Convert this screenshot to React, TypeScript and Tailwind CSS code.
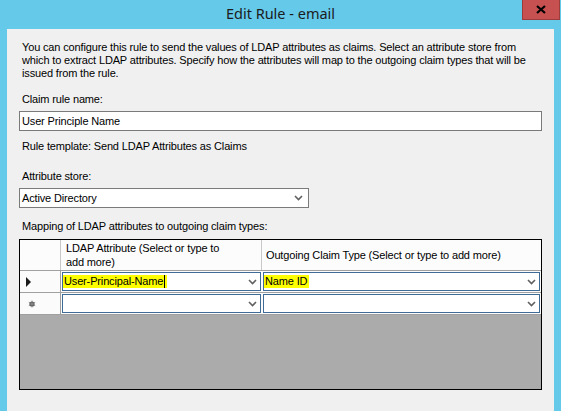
import type { ReactNode } from "react";

function Chevron() {
  return (
    <svg width="9" height="6" viewBox="0 0 9 6" className="shrink-0" aria-hidden="true">
      <polyline points="1,1 4.5,4.5 8,1" fill="none" stroke="#606060" strokeWidth="1.6" />
    </svg>
  );
}

function Label({ children, className = "" }: { children: ReactNode; className?: string }) {
  return <p className={`ml-[3px] whitespace-nowrap text-[11px] leading-[13px] text-black ${className}`}>{children}</p>;
}

function GridCombo({ value, highlight, caret }: { value?: string; highlight?: boolean; caret?: boolean }) {
  return (
    <div className="m-px flex h-[calc(100%-2px)] items-center border border-[#3f6b97] bg-white pr-[3px]">
      <div className="flex min-w-0 flex-1 items-center">
        {value ? (
          <span className={`flex h-[13px] items-center pl-[1px] pr-[2px] text-[11px] leading-[13px] text-black ${highlight ? "bg-[#ffff00]" : ""}`}>
            {value}
            {caret ? <span className="ml-px inline-block h-[13px] w-px bg-black" /> : null}
          </span>
        ) : null}
      </div>
      <Chevron />
    </div>
  );
}

function RowHeader({ children }: { children?: ReactNode }) {
  return (
    <div className="flex items-center border-r border-[#a0a0a0] bg-[#fbfbfb] pl-[6px]">{children}</div>
  );
}

export default function App() {
  return (
    <div className="flex h-[411px] w-[561px] flex-col overflow-hidden bg-[#65c9ea] font-['Liberation_Sans',Arial,sans-serif]">
      <div className="relative flex h-[29px] shrink-0 items-center justify-center">
        <span className="pb-[1px] font-['Noto_Sans',sans-serif] text-[14.5px] text-[#1b1b1b]">Edit Rule - email</span>
        <button
          type="button"
          className="absolute right-px top-0 flex h-[20px] w-[38px] items-center justify-center border border-t-0 border-[#9e3c3c] bg-[#c75050]"
        >
          <svg width="10" height="9" viewBox="0 0 10 9" aria-hidden="true">
            <path d="M1 1 L9 8 M9 1 L1 8" stroke="#000" strokeWidth="2.2" />
          </svg>
        </button>
      </div>

      <div className="mx-[7px] flex flex-1 flex-col bg-[#f0f0f0] px-[12px] pt-[12px] tracking-[-0.15px]">
        <Label>
          You can configure this rule to send the values of LDAP attributes as claims. Select an attribute store from
          <br />
          which to extract LDAP attributes. Specify how the attributes will map to the outgoing claim types that will be
          <br />
          issued from the rule.
        </Label>

        <Label className="mt-[13px]">Claim rule name:</Label>
        <div className="mt-[5px] flex h-[20px] w-[523px] items-center border border-[#7a7a7a] bg-white pl-[2px] text-[11px] text-black">
          User Principle Name
        </div>

        <Label className="mt-[9px]">Rule template: Send LDAP Attributes as Claims</Label>

        <Label className="mt-[17px]">Attribute store:</Label>
        <div className="mt-[5px] flex h-[20px] w-[290px] items-center justify-between border border-[#7a7a7a] bg-white pl-[2px] pr-[5px] text-[11px] text-black">
          <span>Active Directory</span>
          <Chevron />
        </div>

        <Label className="mt-[12px]">Mapping of LDAP attributes to outgoing claim types:</Label>

        <div className="mt-[6px] flex h-[151px] w-[523px] flex-col border border-black bg-[#ababab]">
          <div className="grid h-[31px] grid-cols-[41px_201px_1fr] border-b border-[#a0a0a0] bg-[#fcfcfc]">
            <div className="border-r border-[#c8c8c8]" />
            <div className="flex items-center whitespace-nowrap border-r border-[#c8c8c8] pl-[5px] text-[11px] leading-[14px] text-black">
              LDAP Attribute (Select or type to
              <br />
              add more)
            </div>
            <div className="flex items-center pl-[4px] text-[11px] text-black">
              Outgoing Claim Type (Select or type to add more)
            </div>
          </div>

          <div className="grid h-[22px] grid-cols-[41px_201px_1fr] border-b border-[#a0a0a0] bg-[#fcfcfc]">
            <RowHeader>
              <svg width="6" height="10" viewBox="0 0 6 10" aria-hidden="true">
                <polygon points="0,0 5,5 0,10" fill="#1a1a1a" />
              </svg>
            </RowHeader>
            <GridCombo value="User-Principal-Name" highlight caret />
            <GridCombo value="Name ID" highlight />
          </div>

          <div className="grid h-[22px] grid-cols-[41px_201px_1fr] border-b border-[#a0a0a0] bg-[#fcfcfc]">
            <RowHeader>
              <svg width="8" height="8" viewBox="0 0 8 8" className="ml-[2px]" aria-hidden="true">
                <circle cx="4" cy="4" r="2.6" fill="#555" />
                <path d="M4 0.5 V7.5 M0.8 2.2 L7.2 5.8 M0.8 5.8 L7.2 2.2" stroke="#888" strokeWidth="0.9" />
              </svg>
            </RowHeader>
            <GridCombo />
            <GridCombo />
          </div>
        </div>
      </div>
    </div>
  );
}
